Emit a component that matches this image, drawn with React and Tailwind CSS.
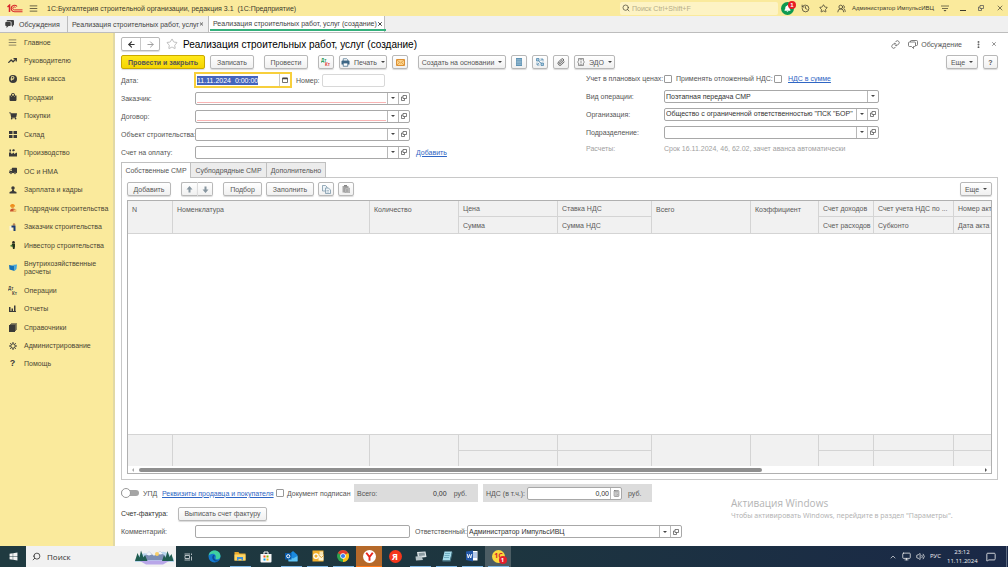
import {
  useEffect,
  useRef,
} from "react";

import {
  AlignJustify,
  ArrowLeft,
  ArrowRight,
  Calculator,
  ChevronUp,
  EllipsisVertical,
  History,
  Link,
  MessageSquare,
  Monitor,
  Paperclip,
  Search,
  Star,
  TrendingUp,
  UsersRound,
  Volume2,
  X,
} from "lucide-react";

import {
  FaBell,
  FaRubleSign,
  FaShoppingBag,
  FaShoppingCart,
  FaTruck,
  FaWindows,
} from "react-icons/fa";

// =====================================
// ICONS
// =====================================
function LogoIcon() {
  return (
    <svg viewBox="0 0 32 18" className="w-4 h-[9px]" fill="none" stroke="#d8262c" strokeWidth="2">
      <path d="M1 6 L5 2.500 V16" strokeWidth="3" />
      <path d="M20 5 A6.500 6.500 0 1 0 15 15.500 H31" strokeWidth="2.400" />
      <path d="M17 7 A3 3 0 1 0 15 11.800 H31" />
    </svg>
  );
}

function ChatIcon() {
  return (
    <svg viewBox="0 0 18 16" className="w-[9px] h-2" fill="#3f3f3f">
      <path d="M5 0h11a2 2 0 0 1 2 2v7a2 2 0 0 1-2 2v3l-3-3V5a2 2 0 0 0-2-2H3a3 3 0 0 1 2-3z" />
      <path d="M2 4h8a1.500 1.500 0 0 1 1.500 1.500v5A1.500 1.500 0 0 1 10 12H7l-4 4v-4H2a1.500 1.500 0 0 1-1.500-1.500v-5A1.500 1.500 0 0 1 2 4z" />
    </svg>
  );
}

function ChatsOutlineIcon() {
  return (
    <svg viewBox="0 0 20 18" className="w-[10px] h-[9px]" fill="none" stroke="#555" strokeWidth="1.500">
      <path d="M5 4V2.500A1.500 1.500 0 0 1 6.500 1H17a2 2 0 0 1 2 2v6a2 2 0 0 1-2 2h-2" />
      <path d="M3 4h10a2 2 0 0 1 2 2v5a2 2 0 0 1-2 2h-2v4l-4-4H3a2 2 0 0 1-2-2V6a2 2 0 0 1 2-2z" />
    </svg>
  );
}

function WarehouseIcon() {
  return (
    <svg viewBox="0 0 16 14" className="w-2 h-[7px]" fill="#3a3a3a">
      <path d="M0 0h7v6H0zM9 0h7v6H9zM0 8h7v6H0zM9 8h7v6H9z" />
    </svg>
  );
}

function FactoryIcon() {
  return (
    <svg viewBox="0 0 16 16" className="w-2 h-2" fill="#3a3a3a">
      <path d="M0 15V7h4l1 3 5-3v3l6-3v8z" />
      <path d="M1 1h3v4H1zM6 2l4-2 2 3-4 2z" />
    </svg>
  );
}

function PersonIcon() {
  return (
    <svg viewBox="0 0 16 16" className="w-2 h-2" fill="#3a3a3a">
      <circle cx="8" cy="4" r="3.500" />
      <path d="M6 7h4v3l5 2v3H1v-3l5-2z" />
    </svg>
  );
}

function ContractorIcon() {
  return (
    <svg viewBox="0 0 16 16" className="w-2 h-2">
      <circle cx="7" cy="5" r="3.500" fill="#e8a33c" />
      <path d="M2 5a5 5 0 0 1 10 0z" fill="#f08c1a" />
      <path d="M2 15q0-6 6-6t6 6z" fill="#c8532f" />
      <path d="M9 11h6v4H9z" fill="#f3c46a" />
    </svg>
  );
}

function CustomerIcon() {
  return (
    <svg viewBox="0 0 16 16" className="w-2 h-2">
      <path d="M1 6h6v9H1z" fill="#f6f3e2" />
      <circle cx="10" cy="3" r="2.500" fill="#b98256" />
      <path d="M5 5h8v11H9V9H5z" fill="#1d3b73" />
    </svg>
  );
}

function InvestorIcon() {
  return (
    <svg viewBox="0 0 16 16" className="w-2 h-2">
      <circle cx="9" cy="2.500" r="2.500" fill="#2c2a22" />
      <path d="M6 5h6v6l-1 5H8l-1-5H5z" fill="#23331f" />
      <path d="M3 8h4v3H3z" fill="#4b8b3b" />
    </svg>
  );
}

function InternalIcon() {
  return (
    <svg viewBox="0 0 16 14" className="w-2 h-[7px]">
      <path d="M0 2l11 2v10L1 11z" fill="#1471b8" />
      <path d="M5 2l11-1-1 9-4 4V4z" fill="#3fa6e0" />
    </svg>
  );
}

function OperationsIcon() {
  return (
    <svg viewBox="0 0 20 18" className="w-[10px] h-[9px]" fill="#4a4a4a">
      <text x="0" y="8" fontSize="9" fontFamily="Liberation Sans, sans-serif" fontWeight="bold">Дт</text>
      <text x="8" y="17" fontSize="9" fontFamily="Liberation Sans, sans-serif" fontWeight="bold">Кт</text>
    </svg>
  );
}

function ReportsIcon() {
  return (
    <svg viewBox="0 0 14 14" className="w-[7px] h-[7px]" fill="#3a3a3a">
      <path d="M0 4h3v8H0zM5 7h3v5H5zM10 1h3v11h-3zM0 12h14v2H0z" />
    </svg>
  );
}

function BooksIcon() {
  return (
    <svg viewBox="0 0 16 18" className="w-2 h-[9px]">
      <path d="M4 0h12v14H4z" fill="#8b8461" />
      <path d="M2 2h12v14H2z" fill="#6b6650" />
      <path d="M0 4h12v14H0z" fill="#3a3a38" />
    </svg>
  );
}

function GearIcon() {
  return (
    <svg viewBox="0 0 16 16" className="w-2 h-2" fill="none" stroke="#3a3a3a">
      <circle cx="8" cy="8" r="4.500" strokeWidth="2" />
      <path d="M8 0v3M8 13v3M0 8h3M13 8h3M2.500 2.500l2 2M11.500 11.500l2 2M2.500 13.500l2-2M11.500 4.500l2-2" strokeWidth="2" />
    </svg>
  );
}

function DtKtIcon() {
  return (
    <svg viewBox="0 0 20 20" className="w-[10px] h-[10px]">
      <text x="0" y="9" fontSize="9" fill="#1d9a55" fontFamily="Liberation Sans, sans-serif" fontWeight="bold">Дт</text>
      <text x="8" y="18" fontSize="9" fill="#dc3b3b" fontFamily="Liberation Sans, sans-serif" fontWeight="bold">Кт</text>
    </svg>
  );
}

function PrinterIcon() {
  return (
    <svg viewBox="0 0 18 18" className="w-[9px] h-[9px]">
      <path d="M4.500 6V1.500h7l2 2V6" fill="#fff" stroke="#4d7490" strokeWidth="1.500" />
      <path d="M3 5h12a2 2 0 0 1 2 2v6H1V7a2 2 0 0 1 2-2z" fill="#3d6785" />
      <path d="M4.500 10h9v6.500h-9z" fill="#fff" stroke="#3d6785" strokeWidth="1.500" />
    </svg>
  );
}

function MailIcon() {
  return (
    <svg viewBox="0 0 18 14" className="w-[9px] h-[7px]">
      <path d="M1 1h16v12H1z" fill="#fbd28a" stroke="#dc9136" strokeWidth="2" />
      <path d="M2 2l7 6 7-6M2 12l5-5M16 12l-5-5" fill="none" stroke="#dc9136" strokeWidth="1.500" />
    </svg>
  );
}

function OpenIcon() {
  return (
    <svg viewBox="0 0 12 12" className="w-[6px] h-[6px]" fill="none" stroke="#555" strokeWidth="1.500">
      <path d="M4 1h7v6H4z" />
      <path d="M4 4H1v7h6V7" />
    </svg>
  );
}

function CalendarIcon() {
  return (
    <svg viewBox="0 0 12 12" className="w-[6px] h-[6px]" fill="none" stroke="#444" strokeWidth="1.500">
      <path d="M1 2h10v9H1z" />
      <path d="M1 3h10" strokeWidth="3" />
    </svg>
  );
}

function RegisterIcon() {
  return (
    <svg viewBox="0 0 12 16" className="w-[6px] h-2">
      <path d="M0 0h12v16H0z" fill="#5f93b4" />
      <path d="M1 3.500h10M1 6.500h10M1 9.500h10M1 12.500h10" stroke="#cfe2ee" strokeWidth="1" />
    </svg>
  );
}

function StructureIcon() {
  return (
    <svg viewBox="0 0 16 16" className="w-2 h-2" fill="none" stroke="#4d86ab" strokeWidth="1.500">
      <path d="M1 1h5v5H1zM10 10h5v5h-5z" fill="#a8cbe0" />
      <path d="M5 5l6 6M9 2h5v5M2 9v5h5M9 6l4-4M3 13l4-4" />
    </svg>
  );
}

function EdoIcon() {
  return (
    <svg viewBox="0 0 16 16" className="w-2 h-2" fill="none" stroke="#777" strokeWidth="1.500">
      <path d="M3 6V1h10v5M3 10v5h10v-5M5 3.500h6M5 12.500h6M0 8h4M6 8h4M12 8h4" />
    </svg>
  );
}

function CopyIcon() {
  return (
    <svg viewBox="0 0 18 18" className="w-[9px] h-[9px]" fill="#eef4f8" stroke="#7793a6" strokeWidth="1.500">
      <path d="M1 1h6l3 3v8H1z" />
      <path d="M7 6h6l4 4v7H7z" />
      <path d="M9 11h5M9 14h5" strokeWidth="1" />
    </svg>
  );
}

function PasteIcon() {
  return (
    <svg viewBox="0 0 16 16" className="w-2 h-2">
      <path d="M1 2h12v13H1z" fill="#a6a6a6" />
      <path d="M4 0h6v3H4z" fill="#858585" />
      <path d="M6 6h9v10H6z" fill="#c4c4c4" stroke="#8c8c8c" />
      <path d="M8 9h5M8 11h5M8 13h5" stroke="#8c8c8c" />
    </svg>
  );
}

function MoveIcon({ down }) {
  return (
    <svg viewBox="0 0 14 14" className={down ? "w-[7px] h-[7px] rotate-180" : "w-[7px] h-[7px]"} fill="#8796a0">
      <path d="M7 0l6 7H9v6H5V7H1z" />
    </svg>
  );
}

function MenuIcon() {
  return (
    <svg viewBox="0 0 16 14" className="w-2 h-[7px]" stroke="#4a4634" strokeWidth="1.500" fill="none">
      <path d="M0 2h16M2 7h12" />
      <path d="M5 10h6l-3 3z" fill="#4a4634" stroke="none" />
    </svg>
  );
}

function Caret() {
  return <span className="w-0 h-0 border-x-2 border-x-transparent border-t-2 border-t-[#444]" />;
}

// =====================================
// CONTROLS
// =====================================
function Button({ children, className = "", ...rest }) {
  return (
    <button
      type="button"
      className={
        "h-[14px] shrink-0 flex items-center justify-center gap-1 rounded-[2px] border border-[#b8b8b8] bg-gradient-to-b from-white to-[#f0f0f0] shadow-[0_1px_1px_rgba(0,0,0,0.15)] whitespace-nowrap " +
        className
      }
      {...rest}
    >
      {children}
    </button>
  );
}

function Combo({ id, value = "", required, open = true }) {
  return (
    <div className="h-[13px] w-[215px] shrink-0 flex border border-[#a8a8a8] rounded-[2px] bg-white">
      <div className="flex-1 flex px-px pb-px">
        <input
          id={id}
          defaultValue={value}
          className={
            required
              ? "w-full min-w-0 outline-none text-[#333] border-b border-[#f9b4b4]"
              : "w-full min-w-0 outline-none text-[#333]"
          }
        />
      </div>
      <button type="button" aria-label="Выбрать" className="w-[11px] border-l border-[#b8b8b8] flex items-center justify-center">
        <Caret />
      </button>
      {open && (
        <button type="button" aria-label="Открыть" className="w-[11px] border-l border-[#b8b8b8] flex items-center justify-center">
          <OpenIcon />
        </button>
      )}
    </div>
  );
}

function FieldRow({ id, label, children, ...rest }) {
  return (
    <div className="h-[18px] flex items-center">
      <label htmlFor={id} className="w-[74px] shrink-0 whitespace-nowrap">{label}</label>
      <Combo id={id} {...rest} />
      {children}
    </div>
  );
}

function Checkbox({ id }) {
  return (
    <input
      id={id}
      type="checkbox"
      className="appearance-none w-2 h-2 shrink-0 bg-white border border-[#999] rounded-[1px] checked:bg-[#4a6fc0]"
    />
  );
}

// =====================================
// TOP
// =====================================
function TitleBar() {
  return (
    <header className="h-4 shrink-0 flex items-center bg-[#faea9c] text-[#3d3a2c] pl-[7px] pr-1">
      <LogoIcon />
      <AlignJustify className="w-[9px] h-[9px] ml-[6px]" strokeWidth={2} />
      <div className="ml-[9px] flex-1 whitespace-nowrap">
        1С:Бухгалтерия строительной организации, редакция 3.1&nbsp; (1С:Предприятие)
      </div>
      <label className="w-[158px] h-[13px] flex items-center gap-[2px] pl-[2px] bg-[#fdf3c4] rounded-[2px]">
        <Search className="w-2 h-2" />
        <input
          aria-label="Поиск"
          placeholder="Поиск Ctrl+Shift+F"
          className="flex-1 min-w-0 outline-none placeholder:text-[#b5ad88]"
        />
      </label>
      <button type="button" aria-label="Уведомления" className="relative ml-[3px] w-[13px] h-[13px] rounded-full bg-[#0d9a50] flex items-center justify-center text-white">
        <FaBell className="w-[7px] h-[7px]" />
        <span className="absolute -top-px -right-[2px] w-2 h-2 rounded-full bg-[#e81e25] text-[6px] leading-[8px] font-bold">1</span>
      </button>
      <button type="button" aria-label="История" className="ml-[7px]">
        <History className="w-[9px] h-[9px]" />
      </button>
      <button type="button" aria-label="Избранное" className="ml-[9px]">
        <Star className="w-[9px] h-[9px]" />
      </button>
      <button type="button" className="ml-[9px] flex items-center gap-[6px] text-[6px] whitespace-nowrap">
        <UsersRound className="w-[9px] h-[9px]" />
        <span className="w-[82px] text-left">Администратор ИмпульсИВЦ</span>
      </button>
      <button type="button" aria-label="Меню" className="ml-[7px]">
        <MenuIcon />
      </button>
      <button type="button" aria-label="Свернуть" className="ml-[11px] w-[6px] h-[6px] border-b border-[#3d3a2c]" />
      <button type="button" aria-label="Развернуть" className="ml-3">
        <OpenIcon />
      </button>
      <button type="button" aria-label="Закрыть" className="ml-3">
        <X className="w-2 h-2" />
      </button>
    </header>
  );
}

function WindowTabs() {
  return (
    <nav className="h-[17px] shrink-0 flex bg-[#f0f0f0] border-b border-[#bdbdbd] text-[#444] whitespace-nowrap">
      <button type="button" className="w-[68px] flex items-center gap-[5px] pl-[5px] border-r border-[#bdbdbd]">
        <ChatIcon />
        Обсуждения
      </button>
      <button type="button" className="w-[141px] flex items-center justify-between px-1 border-r border-[#bdbdbd]">
        Реализация строительных работ, услуг
        <X className="w-[6px] h-[6px]" strokeWidth={4} />
      </button>
      <button type="button" className="w-[176px] flex border-r border-[#bdbdbd] bg-white">
        <span className="h-[15px] mx-px flex-1 flex items-center justify-between px-[3px] pt-[2px] border-b-2 border-[#35b07c]">
          Реализация строительных работ, услуг (создание)
          <X className="w-[6px] h-[6px]" strokeWidth={4} />
        </span>
      </button>
    </nav>
  );
}

// =====================================
// SIDEBAR
// =====================================
const sections = [
  { title: "Главное", icon: <AlignJustify className="w-[9px] h-[9px]" strokeWidth={1.5} /> },
  { title: "Руководителю", icon: <TrendingUp className="w-[9px] h-[9px]" strokeWidth={3.5} /> },
  {
    title: "Банк и касса",
    icon: (
      <span className="w-2 h-2 rounded-full bg-[#3a3a3a] flex items-center justify-center">
        <FaRubleSign className="w-[5px] h-[5px] text-[#faea9c]" />
      </span>
    ),
  },
  { title: "Продажи", icon: <FaShoppingBag className="w-2 h-2" /> },
  { title: "Покупки", icon: <FaShoppingCart className="w-2 h-2" /> },
  { title: "Склад", icon: <WarehouseIcon /> },
  { title: "Производство", icon: <FactoryIcon /> },
  { title: "ОС и НМА", icon: <FaTruck className="w-2 h-2 -scale-x-100" /> },
  { title: "Зарплата и кадры", icon: <PersonIcon /> },
  { title: "Подрядчик строительства", icon: <ContractorIcon /> },
  { title: "Заказчик строительства", icon: <CustomerIcon /> },
  { title: "Инвестор строительства", icon: <InvestorIcon /> },
  { title: "Внутрихозяйственные расчеты", icon: <InternalIcon />, tall: true },
  { title: "Операции", icon: <OperationsIcon /> },
  { title: "Отчеты", icon: <ReportsIcon /> },
  { title: "Справочники", icon: <BooksIcon /> },
  { title: "Администрирование", icon: <GearIcon /> },
  { title: "Помощь", icon: <span className="text-[9px] font-bold">?</span> },
];

function Sidebar() {
  return (
    <aside className="w-[115px] shrink-0 bg-[#faea9c] border-r-2 border-[#e2d9a4] text-[#4a4634]">
      <ul className="h-[340px] flex flex-col justify-between">
        {sections.map((s) => (
          <li key={s.title}>
            <a
              href="#"
              className={
                s.tall
                  ? "h-[26px] pl-2 flex items-center leading-[8px]"
                  : "h-[18px] pl-2 flex items-center whitespace-nowrap"
              }
            >
              <span className="w-4 shrink-0 pr-[7px] flex justify-center text-[#3a3a3a] [&>*]:shrink-0">{s.icon}</span>
              {s.title}
            </a>
          </li>
        ))}
      </ul>
    </aside>
  );
}

// =====================================
// DOCUMENT
// =====================================
function DocumentHeader() {
  return (
    <div className="h-[22px] flex items-center">
      <div className="flex h-[14px] border border-[#b8b8b8] rounded-[2px] shadow-[0_1px_1px_rgba(0,0,0,0.15)]">
        <button type="button" aria-label="Назад" className="w-[19px] flex items-center justify-center border-r border-[#c8c8c8]">
          <ArrowLeft className="w-[9px] h-[9px] text-[#333]" strokeWidth={3} />
        </button>
        <button type="button" aria-label="Вперед" className="w-[18px] flex items-center justify-center">
          <ArrowRight className="w-[9px] h-[9px] text-[#999]" strokeWidth={2.5} />
        </button>
      </div>
      <button type="button" aria-label="В избранное" className="ml-[6px] mr-[5px]">
        <Star className="w-3 h-3 text-[#aaa]" strokeWidth={1.5} />
      </button>
      <h1 className="flex-1 text-[10px] text-black whitespace-nowrap">
        Реализация строительных работ, услуг (создание)
      </h1>
      <button type="button" aria-label="Ссылка">
        <Link className="w-[9px] h-[9px]" />
      </button>
      <button type="button" className="ml-2 flex items-center gap-[3px]">
        <ChatsOutlineIcon />
        Обсуждение
      </button>
      <button type="button" aria-label="Ещё" className="ml-3">
        <EllipsisVertical className="w-[9px] h-[9px]" strokeWidth={3} />
      </button>
      <button type="button" aria-label="Закрыть" className="ml-2 mr-px">
        <X className="w-[6px] h-[6px]" strokeWidth={2.5} />
      </button>
    </div>
  );
}

function CommandBar() {
  return (
    <div className="flex items-center">
      <Button className="w-[84px] font-bold !border-[#c9a800] !from-[#ffe81a] !to-[#f5d500]">Провести и закрыть</Button>
      <Button className="w-11 ml-[5px]">Записать</Button>
      <Button className="w-11 ml-[10px]">Провести</Button>
      <Button className="w-4 ml-[10px]" aria-label="Дт Кт"><DtKtIcon /></Button>
      <Button className="w-12 ml-[5px]">
        <PrinterIcon />
        Печать
        <Caret />
      </Button>
      <Button className="w-4 ml-[5px]" aria-label="Отправить"><MailIcon /></Button>
      <Button className="w-[88px] ml-[10px]">
        Создать на основании
        <Caret />
      </Button>
      <Button className="w-4 ml-[5px]" aria-label="Реестр"><RegisterIcon /></Button>
      <Button className="w-4 ml-[5px]" aria-label="Структура"><StructureIcon /></Button>
      <Button className="w-4 ml-[5px]" aria-label="Файлы">
        <Paperclip className="w-2 h-2 text-[#666]" strokeWidth={3} />
      </Button>
      <Button className="w-[41px] ml-[5px]">
        <EdoIcon />
        ЭДО
        <Caret />
      </Button>
      <Button className="w-8 ml-auto">
        Еще
        <Caret />
      </Button>
      <Button className="w-[15px] ml-[5px] font-bold">?</Button>
    </div>
  );
}

function DocumentForm() {
  const dateRef = useRef(null);

  useEffect(() => {
    dateRef.current.focus();
    dateRef.current.select();
  }, []);

  return (
    <div className="flex mt-[2px]">
      <div className="w-[465px] shrink-0">
        <div className="h-[18px] flex items-center">
          <label htmlFor="date" className="w-[73px] shrink-0">Дата:</label>
          <div className="w-[98px] h-4 flex border-2 border-[#f7cf3c] bg-white">
            <input
              id="date"
              ref={dateRef}
              defaultValue="11.11.2024  0:00:00"
              className="flex-1 min-w-0 pl-px outline-none selection:bg-[#4464bd] selection:text-white"
            />
            <button type="button" aria-label="Календарь" className="w-[11px] border-l border-[#c8c8c8] flex items-center justify-center">
              <CalendarIcon />
            </button>
          </div>
          <label htmlFor="number" className="ml-1 w-[26px]">Номер:</label>
          <input id="number" className="w-[63px] h-[13px] border border-[#d8d8d8] rounded-[2px] outline-none" />
        </div>
        <FieldRow id="customer" label="Заказчик:" required />
        <FieldRow id="contract" label="Договор:" required />
        <FieldRow id="object" label="Объект строительства:" />
        <FieldRow id="invoice" label="Счет на оплату:">
          <a href="#" className="ml-[6px] text-[#2f66c4] underline">Добавить</a>
        </FieldRow>
      </div>

      <div className="flex-1 -mt-px">
        <div className="h-[17px] flex items-center whitespace-nowrap">
          <label htmlFor="plan" className="w-[78px]">Учет в плановых ценах:</label>
          <Checkbox id="plan" />
          <label htmlFor="deferred" className="ml-1 w-[98px]">Применять отложенный НДС:</label>
          <Checkbox id="deferred" />
          <a href="#" className="ml-[6px] text-[#2f66c4] underline">НДС в сумме</a>
        </div>
        <div className="h-[18px] flex items-center">
          <label htmlFor="kind" className="w-[78px]">Вид операции:</label>
          <div className="relative w-[215px] h-[13px] flex border border-[#a8a8a8] rounded-[2px] bg-white">
            <select id="kind" className="appearance-none flex-1 pl-px outline-none text-[#333]">
              <option>Поэтапная передача СМР</option>
            </select>
            <span className="absolute right-0 inset-y-0 w-[11px] border-l border-[#b8b8b8] flex items-center justify-center pointer-events-none">
              <Caret />
            </span>
          </div>
        </div>
        <div className="h-[18px] flex items-center">
          <label htmlFor="org" className="w-[78px]">Организация:</label>
          <Combo id="org" value={'Общество с ограниченной ответственностью "ПСК "БОР"'} />
        </div>
        <div className="h-[18px] flex items-center">
          <label htmlFor="dept" className="w-[78px]">Подразделение:</label>
          <Combo id="dept" />
        </div>
        <div className="h-[14px] flex items-center text-[#a0a0a0]">
          <span className="w-[78px]">Расчеты:</span>
          Срок 16.11.2024, 46, 62.02, зачет аванса автоматически
        </div>
      </div>
    </div>
  );
}

// =====================================
// TABLE
// =====================================
const cell = "border-r border-[#d4d4d4] px-1 font-normal text-left overflow-hidden whitespace-nowrap";

function WorksTable() {
  return (
    <div className="mt-1 border border-[#b0b0b0]">
      <table className="w-full table-fixed border-separate border-spacing-0">
        <colgroup>
          <col className="w-[45px]" />
          <col />
          <col className="w-[89px]" />
          <col className="w-[99px]" />
          <col className="w-[94px]" />
          <col className="w-[99px]" />
          <col className="w-[68px]" />
          <col className="w-[55px]" />
          <col className="w-[80px]" />
          <col className="w-[37px]" />
        </colgroup>
        <thead className="bg-[#f1f1f1] text-[#5a5a5a]">
          <tr className="h-4">
            <th className={cell}>N</th>
            <th className={cell}>Номенклатура</th>
            <th className={cell}>Количество</th>
            <th className={cell + " border-b"}>Цена</th>
            <th className={cell + " border-b"}>Ставка НДС</th>
            <th className={cell}>Всего</th>
            <th className={cell}>Коэффициент</th>
            <th className={cell + " border-b"}>Счет доходов</th>
            <th className={cell + " border-b"}>Счет учета НДС по ...</th>
            <th className={cell + " border-b border-r-0 !pr-0"}>Номер акт</th>
          </tr>
          <tr className="h-[17px]">
            <th className={cell + " border-b"} />
            <th className={cell + " border-b"} />
            <th className={cell + " border-b"} />
            <th className={cell + " border-b"}>Сумма</th>
            <th className={cell + " border-b"}>Сумма НДС</th>
            <th className={cell + " border-b"} />
            <th className={cell + " border-b"} />
            <th className={cell + " border-b !pr-0"}>Счет расходов</th>
            <th className={cell + " border-b"}>Субконто</th>
            <th className={cell + " border-b border-r-0 !pr-0"}>Дата акта</th>
          </tr>
        </thead>
        <tbody>
          <tr className="h-[200px]">
            <td colSpan={10} />
          </tr>
        </tbody>
        <tfoot className="bg-[#f1f1f1]">
          <tr className="h-[17px]">
            <td className={cell + " border-t"} />
            <td className={cell + " border-t"} />
            <td className={cell + " border-t"} />
            <td className={cell + " border-y"} />
            <td className={cell + " border-y"} />
            <td className={cell + " border-t"} />
            <td className={cell + " border-t"} />
            <td className={cell + " border-y"} />
            <td className={cell + " border-y"} />
            <td className={cell + " border-y border-r-0"} />
          </tr>
          <tr className="h-[15px]">
            <td className={cell} />
            <td className={cell} />
            <td className={cell} />
            <td className={cell} />
            <td className={cell} />
            <td className={cell} />
            <td className={cell} />
            <td className={cell} />
            <td className={cell} />
            <td />
          </tr>
        </tfoot>
      </table>
      <div className="h-[7px] flex items-center px-1 gap-1">
        <span className="w-0 h-0 border-y-2 border-y-transparent border-r-2 border-r-[#aaa] mr-px" />
        <div className="flex-1">
          <div className="h-1 w-[74%] rounded-full bg-[#8f8f8f]" />
        </div>
        <span className="w-0 h-0 border-y-2 border-y-transparent border-l-2 border-l-[#555]" />
      </div>
    </div>
  );
}

function WorksPanel() {
  return (
    <section className="mt-px">
      <div role="tablist" className="flex h-4 -mb-px">
        <button type="button" role="tab" aria-selected="true" className="relative w-[70px] border border-b-0 border-[#c0c0c0] bg-white">Собственные СМР</button>
        <button type="button" role="tab" aria-selected="false" className="w-[76px] border border-l-0 border-[#c0c0c0] bg-[#ececec]">Субподрядные СМР</button>
        <button type="button" role="tab" aria-selected="false" className="w-[59px] border border-l-0 border-[#c0c0c0] bg-[#ececec]">Дополнительно</button>
      </div>
      <div className="border border-[#c8c8c8] px-[5px] pt-1 pb-[5px]">
        <div className="flex items-center">
          <Button className="w-11">Добавить</Button>
          <Button className="w-4 ml-[10px] rounded-r-none border-r-0" aria-label="Вверх">
            <MoveIcon />
          </Button>
          <Button className="w-4 rounded-l-none border-l-[#ddd]" aria-label="Вниз">
            <MoveIcon down />
          </Button>
          <Button className="w-[39px] ml-[10px]">Подбор</Button>
          <Button className="w-12 ml-1">Заполнить</Button>
          <Button className="w-4 ml-1" aria-label="Копировать"><CopyIcon /></Button>
          <Button className="w-4 ml-1" aria-label="Вставить"><PasteIcon /></Button>
          <Button className="w-8 ml-auto">
            Еще
            <Caret />
          </Button>
        </div>
        <WorksTable />
      </div>
    </section>
  );
}

function DocumentFooter() {
  return (
    <footer className="mt-1 whitespace-nowrap">
      <div className="h-[18px] flex items-center">
        <label className="w-[41px] flex items-center gap-1">
          <input
            type="checkbox"
            role="switch"
            className="appearance-none w-[18px] h-[6px] rounded-full bg-[#a5a5a5] flex items-center before:content-[''] before:w-[10px] before:h-[10px] before:shrink-0 before:rounded-full before:bg-white before:border before:border-[#999]"
          />
          УПД
        </label>
        <a href="#" className="w-[114px] text-[#2f66c4] underline">Реквизиты продавца и покупателя</a>
        <Checkbox id="signed" />
        <label htmlFor="signed" className="ml-[3px] w-[67px]">Документ подписан</label>
        <div className="w-[124px] h-[18px] flex items-center bg-[#dcdcdc] px-[3px]">
          Всего:
          <output className="ml-auto text-[#333]">0,00</output>
          <span className="ml-[7px] mr-2">руб.</span>
        </div>
        <div className="ml-[5px] w-[169px] h-[18px] flex items-center bg-[#dcdcdc] px-[3px]">
          <label htmlFor="vat" className="w-[41px]">НДС (в т.ч.):</label>
          <div className="w-[95px] h-[13px] flex border border-[#a8a8a8] rounded-[2px] bg-white">
            <input id="vat" defaultValue="0,00" className="flex-1 min-w-0 pr-px text-right outline-none text-[#333]" />
            <button type="button" aria-label="Калькулятор" className="w-[11px] border-l border-[#b8b8b8] flex items-center justify-center">
              <Calculator className="w-[7px] h-[7px]" />
            </button>
          </div>
          <span className="ml-[6px]">руб.</span>
        </div>
      </div>
      <div className="h-[23px] flex items-center">
        <span className="w-[57px] text-[#333]">Счет-фактура:</span>
        <Button className="w-[89px]">Выписать счет фактуру</Button>
      </div>
      <div className="h-[13px] flex items-center">
        <label htmlFor="comment" className="w-[74px]">Комментарий:</label>
        <input id="comment" className="w-[215px] h-[13px] border border-[#a8a8a8] rounded-[2px] outline-none" />
        <label htmlFor="responsible" className="ml-[5px] w-[52px]">Ответственный:</label>
        <Combo id="responsible" value="Администратор ИмпульсИВЦ" />
      </div>
    </footer>
  );
}

// =====================================
// TASKBAR
// =====================================
const apps = [
  {
    name: "Представление задач",
    icon: (
      <svg viewBox="0 0 18 16" className="w-[9px] h-2" fill="none" stroke="#e5eaec" strokeWidth="1.500">
        <path d="M2 5h9v6H2zM1 2h11M1 14h11M15 1v3M15 7v8" />
      </svg>
    ),
  },
  {
    name: "Edge",
    icon: (
      <svg viewBox="0 0 24 24" className="w-[13px] h-[13px]">
        <circle cx="12" cy="12" r="11" fill="#1479cf" />
        <path d="M1 11C2 4 7 1 12 1c7 0 11 5 11 10 0 4-3 6-6 6-2 0-3-1-3-2 2-5-2-8-5-8-4 0-7 2-8 4z" fill="#3fd0a0" />
        <path d="M9 10c-3 4 0 10 6 11 3 0 5-1 6-2-4 1-9 0-10-5 0-2 1-3 2-3-1-2-3-2-4-1z" fill="#0c4d96" />
      </svg>
    ),
  },
  {
    name: "Проводник",
    open: true,
    icon: (
      <svg viewBox="0 0 24 20" className="w-3 h-[10px]">
        <path d="M1 2h8l2 3h12v14H1z" fill="#e9a92c" />
        <path d="M1 7h22v12H1z" fill="#fcd667" />
        <path d="M6 12h12v7h-3v-3H9v3H6z" fill="#3f8fd8" />
      </svg>
    ),
  },
  {
    name: "Store",
    icon: (
      <svg viewBox="0 0 24 24" className="w-3 h-3">
        <path d="M8 6V2h8v4" fill="none" stroke="#fff" strokeWidth="2" />
        <path d="M1 6h22v15a2 2 0 0 1-2 2H3a2 2 0 0 1-2-2z" fill="#f8f8f8" />
        <path d="M7 9h4v4H7z" fill="#f25022" />
        <path d="M13 9h4v4h-4z" fill="#7fba00" />
        <path d="M7 15h4v4H7z" fill="#00a4ef" />
        <path d="M13 15h4v4h-4z" fill="#ffb900" />
      </svg>
    ),
  },
  {
    name: "Outlook",
    open: true,
    icon: (
      <svg viewBox="0 0 26 24" className="w-[13px] h-3">
        <path d="M7 10l9-8 9 8v12H7z" fill="#1a8ae0" />
        <path d="M7 12l9 5 9-5v11H7z" fill="#5fc3f5" />
        <path d="M0 6h13v13H0z" fill="#0a5cab" />
        <circle cx="6.500" cy="12.500" r="3.200" fill="none" stroke="#fff" strokeWidth="2" />
      </svg>
    ),
  },
  {
    name: "Почта",
    open: true,
    icon: (
      <svg viewBox="0 0 24 24" className="w-3 h-3">
        <path d="M1 1h22v22H1z" fill="#f3b02d" />
        <path d="M13 9h10v12H13z" fill="#fff3d2" />
        <circle cx="8" cy="12" r="4.500" fill="none" stroke="#fff" strokeWidth="2.500" />
        <path d="M15 3h7v7h-7z" fill="#fbe7b4" />
        <path d="M13 10l6 5 5-5" fill="none" stroke="#d18a12" strokeWidth="1.500" />
      </svg>
    ),
  },
  {
    name: "Chrome",
    open: true,
    icon: (
      <svg viewBox="0 0 24 24" className="w-3 h-3">
        <circle cx="12" cy="12" r="12" fill="#2fa34f" />
        <path d="M12 12L1.600 6A12 12 0 0 1 22.400 6z" fill="#e33b2e" />
        <path d="M12 12L22.400 6A12 12 0 0 1 12 24z" fill="#fbc116" />
        <circle cx="12" cy="12" r="5.500" fill="#fff" />
        <circle cx="12" cy="12" r="4.200" fill="#3b7ded" />
      </svg>
    ),
  },
  {
    name: "Яндекс Браузер",
    className: "bg-[#b5692a]",
    bar: "bg-[#ff7a1a]",
    icon: (
      <svg viewBox="0 0 24 24" className="w-[13px] h-[13px]">
        <circle cx="12" cy="12" r="12" fill="#fff" />
        <path d="M6 5l6 8v7M18 5l-6 8" fill="none" stroke="#e8231a" strokeWidth="3.500" />
      </svg>
    ),
  },
  {
    name: "Яндекс",
    icon: (
      <span className="w-[13px] h-[13px] rounded-full bg-[#f5371c] text-white text-[9px] leading-[13px] font-bold text-center">Я</span>
    ),
  },
  {
    name: "Сканер",
    open: true,
    icon: (
      <svg viewBox="0 0 24 20" className="w-3 h-[10px]">
        <path d="M4 2l17-1 2 11-17 2z" fill="#dfe6e8" />
        <path d="M7 4l12-1 1 6-12 1z" fill="#8a9aa0" />
        <path d="M1 11l12-1 3 8-14 1z" fill="#b9c6ca" />
      </svg>
    ),
  },
  {
    name: "Блокнот",
    open: true,
    icon: (
      <svg viewBox="0 0 24 22" className="w-3 h-[11px]">
        <path d="M7 1h15l-4 18H3z" fill="#a8dcec" />
        <path d="M22 1l1 3-4 17H3v-2h15z" fill="#4b7f90" />
        <path d="M8 5h10M7 9h10M6 13h10" stroke="#5f9fb3" strokeWidth="1.500" />
      </svg>
    ),
  },
  {
    name: "Word",
    open: true,
    icon: (
      <svg viewBox="0 0 24 24" className="w-3 h-3">
        <path d="M9 2h14v19H9z" fill="#fff" />
        <path d="M14 6h8M14 10h8M14 14h8" stroke="#3f74c4" strokeWidth="1.500" />
        <path d="M0 3l14-2v22L0 20z" fill="#2358a8" />
        <path d="M2.500 8l2 8 2.500-7 2.500 7 2-8" fill="none" stroke="#fff" strokeWidth="1.800" />
      </svg>
    ),
  },
  {
    name: "1С:Предприятие",
    open: true,
    className: "bg-[#4c5d64]",
    icon: (
      <span className="relative w-[13px] h-[13px] rounded-full bg-[#fbd93d] text-[#d2262c] text-[7px] leading-[12px] font-bold pl-px">
        1С
        <span className="absolute -right-[2px] -bottom-px w-2 h-2 rounded-full bg-[#e3202c] text-white text-[6px] leading-[8px] text-center">1</span>
      </span>
    ),
  },
];

function Landscape() {
  return (
    <svg viewBox="0 0 78 40" className="w-[39px] h-5">
      <path d="M0 26Q12 8 26 14T50 12T78 24V30H0z" fill="#b9d6ee" />
      <path d="M12 26L28 9l10 9 12-10 18 18z" fill="#7d8fb5" />
      <path d="M22 15l6-6 6 6-6 2zM44 13l6-5 6 6-6 1z" fill="#eef4fb" />
      <circle cx="44" cy="14" r="4" fill="#f8cf6a" />
      <path d="M8 27h62L56 35H22z" fill="#b8a6e8" />
      <path d="M0 28L5 12l4 9 3-14 5 14 3-5 5 12zM54 28l4-12 3 6 4-14 4 12 4-6 4 14z" fill="#1f5d50" />
    </svg>
  );
}

function Taskbar() {
  return (
    <footer className="h-[21px] shrink-0 flex items-stretch bg-gradient-to-r from-[#1f3a40] via-[#1d353f] to-[#1a2847] text-[#f2f2f2] font-['Open_Sans','Noto_Sans',sans-serif]">
      <button type="button" aria-label="Пуск" className="w-[26px] flex items-center justify-center">
        <FaWindows className="w-[9px] h-[9px]" />
      </button>
      <label className="w-[150px] flex items-center gap-[6px] pl-[6px] pr-[2px] bg-[#f1f1f1] text-[#222]">
        <Search className="w-[9px] h-[9px] -scale-x-100" />
        <input
          aria-label="Поиск в Windows"
          placeholder="Поиск"
          className="flex-1 min-w-0 outline-none text-[8px] placeholder:text-[#333]"
        />
        <Landscape />
      </label>
      <div className="w-[335px] flex">
        {apps.map((app) => (
          <button
            key={app.name}
            type="button"
            aria-label={app.name}
            className={"flex-1 flex flex-col items-center " + (app.className || "")}
          >
            <span className="flex-1 flex items-center">{app.icon}</span>
            {app.open && <span className="h-px w-[21px] bg-[#7fb8e6]" />}
            {app.bar && <span className={"h-px w-full " + app.bar} />}
          </button>
        ))}
      </div>
      <div className="ml-auto flex items-center gap-1 pr-px">
        <ChevronUp className="w-2 h-2" />
        <Monitor className="w-[9px] h-[9px] ml-px" />
        <Volume2 className="w-[9px] h-[9px] ml-px" />
        <span className="w-[13px] ml-px text-[6px]">РУС</span>
        <time className="w-[30px] text-center text-[6px] leading-[9px]">
          23:12
          <br />
          11.11.2024
        </time>
        <MessageSquare className="w-[10px] h-[10px] ml-[5px]" />
        <span className="ml-[6px] h-[21px] border-l border-[#5c6a80]" />
      </div>
    </footer>
  );
}

export default function App() {
  return (
    <div className="min-h-screen flex flex-col bg-white text-[7px] leading-[9px] text-[#555] font-['Liberation_Sans',Arial,sans-serif]">
      <TitleBar />
      <WindowTabs />
      <div className="flex-1 flex">
        <Sidebar />
        <main className="relative flex-1 min-w-0 pl-[6px] pr-[10px]">
          <DocumentHeader />
          <CommandBar />
          <DocumentForm />
          <WorksPanel />
          <DocumentFooter />
          <div className="absolute right-[38px] bottom-[25px] w-[239px] text-[#b4b4b4] whitespace-nowrap pointer-events-none">
            <p className="text-[10px] leading-[13px] font-['Open_Sans',sans-serif]">Активация Windows</p>
            <p className="leading-[11px] font-['Noto_Sans',sans-serif]">Чтобы активировать Windows, перейдите в раздел "Параметры".</p>
          </div>
        </main>
      </div>
      <Taskbar />
    </div>
  );
}
